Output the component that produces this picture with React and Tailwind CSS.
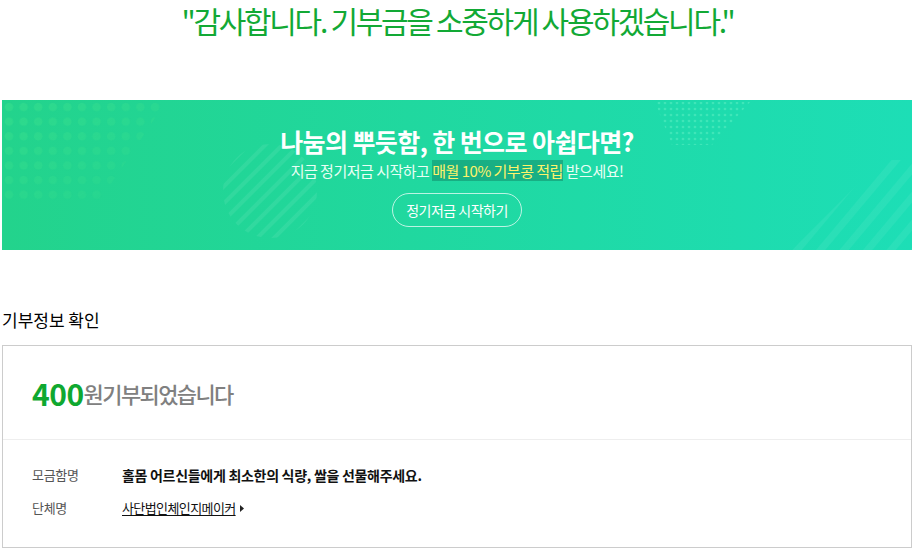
import React from 'react';

const kr = { fontFamily: '"Noto Sans CJK KR", "Noto Sans", sans-serif' };

function BannerDecor() {
  return (
    <svg className="absolute inset-0 h-full w-full pointer-events-none" width="910" height="150" viewBox="0 0 910 150">
      <defs>
        <pattern id="bigDots" width="14.6" height="14.6" patternUnits="userSpaceOnUse">
          <circle cx="7" cy="7" r="4.2" fill="#3ee38f" fillOpacity="0.45" />
        </pattern>
        <pattern id="tinyDots" width="6" height="6" patternUnits="userSpaceOnUse">
          <circle cx="3" cy="3" r="1.3" fill="#5ff0c4" fillOpacity="0.5" />
        </pattern>
        <pattern id="stripes" width="12" height="12" patternUnits="userSpaceOnUse" patternTransform="rotate(45)">
          <rect width="4" height="12" fill="#ffffff" fillOpacity="0.07" />
        </pattern>
        <pattern id="wideStripes" width="18" height="18" patternUnits="userSpaceOnUse" patternTransform="rotate(40)">
          <rect width="7" height="18" fill="#ffffff" fillOpacity="0.06" />
        </pattern>
        <linearGradient id="fadeL" x1="0" y1="0" x2="1" y2="1">
          <stop offset="0" stopColor="#fff" stopOpacity="1" />
          <stop offset="1" stopColor="#fff" stopOpacity="0.2" />
        </linearGradient>
        <mask id="maskL">
          <polygon points="0,0 165,0 95,105 0,105" fill="url(#fadeL)" />
        </mask>
      </defs>
      <rect x="0" y="0" width="170" height="105" fill="url(#bigDots)" mask="url(#maskL)" />
      <circle cx="268" cy="91" r="47" fill="url(#stripes)" />
      <polygon points="53,2 148,2 110,45 70,45" transform="translate(600 0)" fill="url(#tinyDots)" />
      <polygon points="880,60 910,60 910,150 790,150" fill="url(#wideStripes)" />
    </svg>
  );
}

export default function App() {
  return (
    <div className="w-[915px] bg-white pb-[4px]" style={kr}>
      <h1 className="text-center text-[30px] leading-[40px] tracking-[-2.3px] text-[#12a935] font-normal">
        "감사합니다. 기부금을 소중하게 사용하겠습니다."
      </h1>

      <div className="relative mx-[2px] mt-[60px] h-[150px] w-[910px] overflow-hidden bg-gradient-to-r from-[#23d38c] to-[#1ddeb6]">
        <BannerDecor />
        <div className="relative flex flex-col items-center pt-[24px]">
          <p className="text-[25px] leading-[34px] font-bold tracking-[-0.6px] text-white">
            나눔의 뿌듯함, 한 번으로 아쉽다면?
          </p>
          <p className="mt-[3px] text-[15px] leading-[20px] tracking-[-0.5px] text-[#e9fff5]">
            지금 정기저금 시작하고{' '}
            <span className="bg-[#17a47c]/80 text-[#fff36a]">매월 10% 기부콩 적립</span>{' '}
            받으세요!
          </p>
          <button className="mt-[12px] h-[34px] w-[130px] rounded-full border border-white/70 text-[14px] tracking-[-0.5px] text-white">
            정기저금 시작하기
          </button>
        </div>
      </div>

      <h2 className="mx-[2px] mt-[58px] text-[17px] leading-[24px] text-black font-normal">기부정보 확인</h2>

      <div className="mx-[2px] mt-[13px] w-[910px] border border-[#cccccc]">
        <div className="flex h-[93px] items-center px-[29px] pt-[2px]">
          <span className="text-[30px] font-bold text-[#0fa830] tracking-[-0.5px]">400</span>
          <span className="text-[22px] font-medium text-[#808080] tracking-[-1.6px]">원기부되었습니다</span>
        </div>
        <div className="border-t border-[#eeeeee] px-[29px] pt-[23px] pb-[27px] text-[13px]">
          <div className="flex items-center h-[24px]">
            <span className="w-[90px] text-[#555555] tracking-[-0.3px]">모금함명</span>
            <span className="text-[14px] font-bold text-[#111111] tracking-[-0.3px]">홀몸 어르신들에게 최소한의 식량, 쌀을 선물해주세요.</span>
          </div>
          <div className="mt-[9px] flex items-center h-[24px]">
            <span className="w-[90px] text-[#555555] tracking-[-0.3px]">단체명</span>
            <a className="text-[#111111] underline underline-offset-2 tracking-[-0.6px]">사단법인체인지메이커</a>
            <svg className="ml-[4px]" width="4" height="7" viewBox="0 0 4 7">
              <polygon points="0,0 4,3.5 0,7" fill="#222" />
            </svg>
          </div>
        </div>
      </div>
    </div>
  );
}
